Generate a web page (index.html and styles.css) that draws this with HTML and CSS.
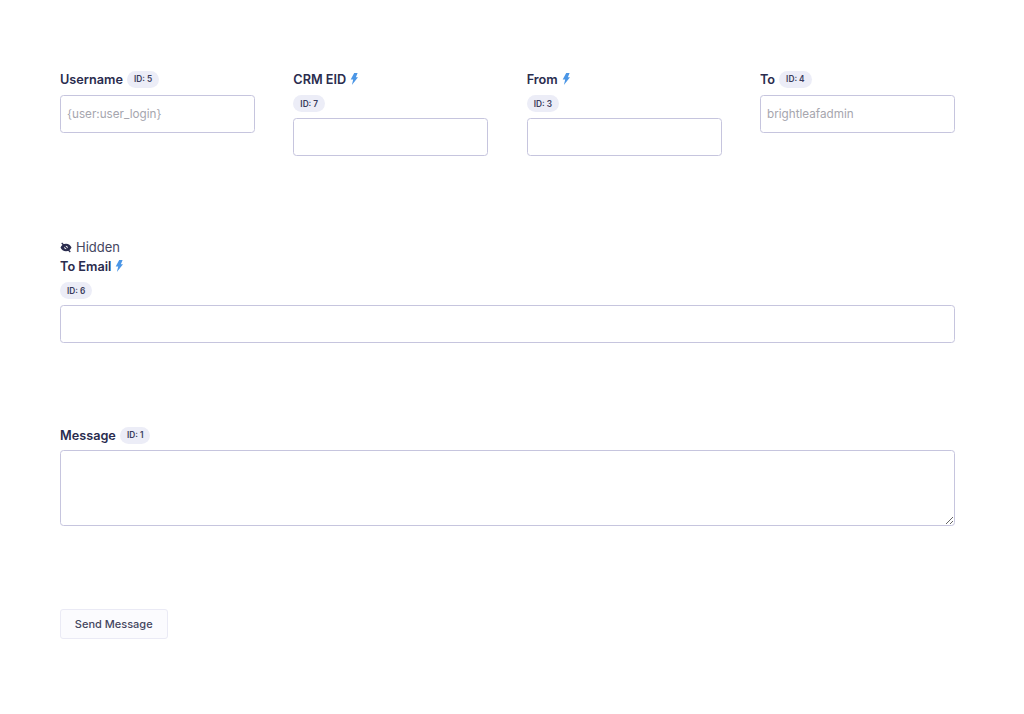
FILE: index.html
```html
<!DOCTYPE html>
<html lang="en">
<head>
<meta charset="utf-8">
<title>Send Message</title>
<link rel="stylesheet" href="styles.css">
</head>
<body>
<form class="form">
  <div class="row-four">
    <div class="field">
      <div class="label-line"><span class="label">Username</span><span class="badge">ID: 5</span></div>
      <input class="input" type="text" placeholder="{user:user_login}">
    </div>
    <div class="field">
      <div class="label-line"><span class="label">CRM EID</span><svg class="bolt" viewBox="0 0 8 12"><path d="M4.200 0H7.600L5.900 4.300H8L1.900 12 3.200 6.600H.7z"/></svg></div>
      <div class="badge-line"><span class="badge flush">ID: 7</span></div>
      <input class="input" type="text">
    </div>
    <div class="field">
      <div class="label-line"><span class="label">From</span><svg class="bolt" viewBox="0 0 8 12"><path d="M4.200 0H7.600L5.900 4.300H8L1.900 12 3.200 6.600H.7z"/></svg></div>
      <div class="badge-line"><span class="badge flush">ID: 3</span></div>
      <input class="input" type="text">
    </div>
    <div class="field">
      <div class="label-line"><span class="label">To</span><span class="badge">ID: 4</span></div>
      <input class="input" type="text" placeholder="brightleafadmin">
    </div>
  </div>

  <div class="field wide-email">
    <div class="hidden-line"><svg class="eye" viewBox="0 0 14 12"><path d="M7 1.600C4 1.600 1.700 3.600.6 6c1.100 2.400 3.400 4.400 6.400 4.400S12.300 8.400 13.400 6C12.300 3.600 10 1.600 7 1.600z"/><circle class="eye-pupil" cx="7" cy="6" r="2"/><path class="eye-slash" d="M2 .8l10 10.400"/></svg><span>Hidden</span></div>
    <div class="label-line"><span class="label">To Email</span><svg class="bolt" viewBox="0 0 8 12"><path d="M4.200 0H7.600L5.900 4.300H8L1.900 12 3.200 6.600H.7z"/></svg></div>
    <div class="badge-line"><span class="badge flush">ID: 6</span></div>
    <input class="input" type="text">
  </div>

  <div class="field wide-message">
    <div class="label-line"><span class="label">Message</span><span class="badge">ID: 1</span></div>
    <textarea class="input textarea"></textarea>
  </div>

  <button class="button" type="button">Send Message</button>
</form>
</body>
</html>
```

FILE: styles.css
```css
* { box-sizing: border-box; }
html, body { margin: 0; padding: 0; background: #fff; }
body { font-family: Inter, "Liberation Sans", sans-serif; color: #2b2d4f; }
.form { padding: 69px 69px 0 60px; width: 1024px; height: 714px; }
.row-four { display: grid; grid-template-columns: repeat(4, 195px); column-gap: 38.33px; }
.field { display: flex; flex-direction: column; }
.label-line { display: flex; align-items: center; height: 20px; margin-bottom: 6px; }
.label { padding-top: 2px; font-size: 12.700px; font-weight: 600; line-height: 20px; color: #2a2c4e; }
.badge { display: inline-flex; align-items: center; height: 17px; padding: 0 7px; margin-left: 4px; border-radius: 9px; background: #ecedf7; font-size: 8.300px; font-weight: 600; color: #3a3c5c; }
.badge.flush { margin-left: 0; }
.badge-line { display: flex; height: 17px; margin-bottom: 6px; }
.bolt { width: 8px; height: 12px; margin-left: 4px; fill: #4b96e6; }
.input { display: block; width: 100%; height: 37.500px; padding: 0 6px; border: 1px solid #c6c5de; border-radius: 3.500px; background: #fff; font-family: inherit; font-size: 11.700px; color: #2b2d4f; outline: none; }
.input::placeholder { color: #a6a6ae; opacity: 1; }
.wide-email { margin-top: 81.500px; }
.hidden-line { display: flex; align-items: center; height: 20px; margin-bottom: -1px; font-size: 13px; color: #44465f; }
.eye { width: 12px; height: 11px; margin-right: 4px; }
.eye path { fill: #2a2c4e; }
.eye .eye-pupil { fill: #fff; }
.eye path.eye-slash { fill: none; stroke: #2a2c4e; stroke-width: 1.500; }
.wide-message { margin-top: 82.500px; }
.wide-message .label-line { margin-bottom: 5px; }
.textarea { height: 76px; padding: 6px; }
.button { display: block; width: 107.500px; height: 30.500px; margin-top: 82.500px; padding: 0; border: 1px solid #eaeaf5; border-radius: 3px; background: #fbfbfe; font-family: inherit; font-size: 11px; font-weight: 500; color: #44465f; }
```
